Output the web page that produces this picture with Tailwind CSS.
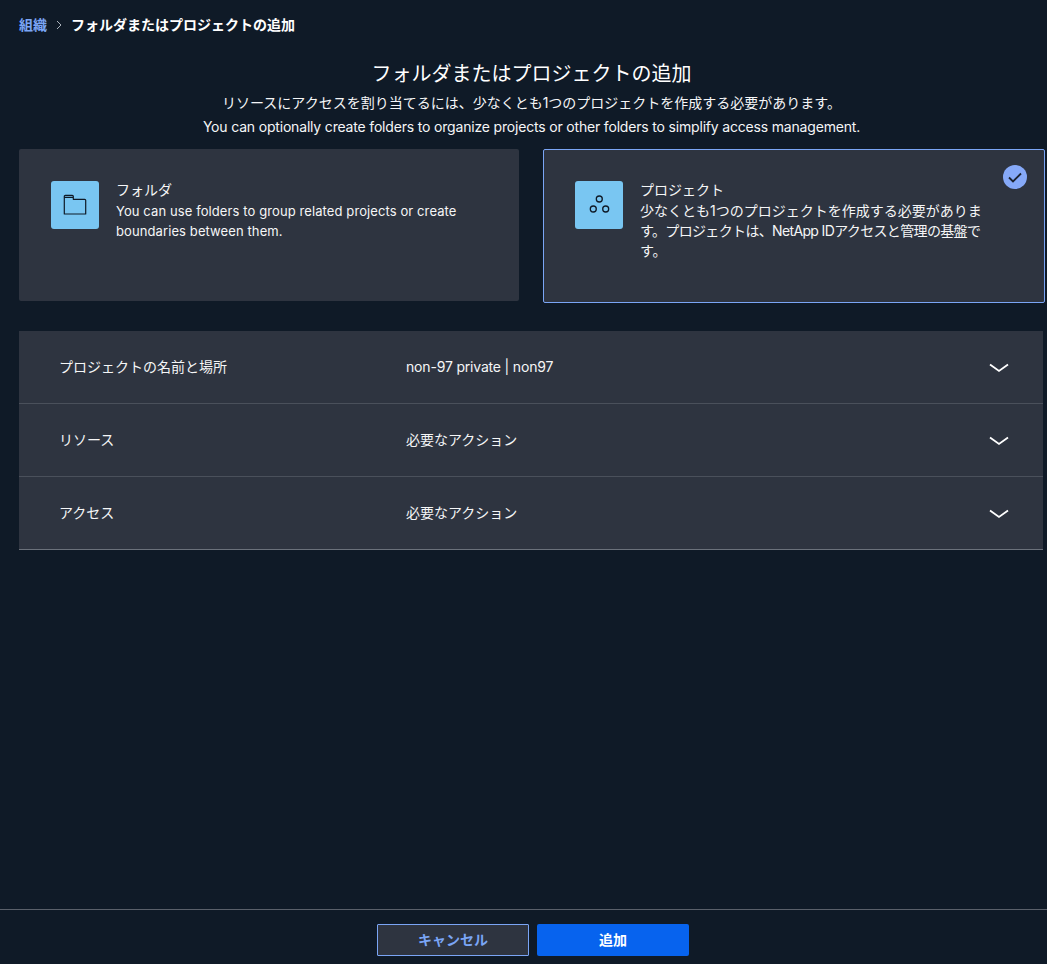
<!doctype html>
<html lang="ja">
<head>
<meta charset="utf-8">
<script src="https://cdn.jsdelivr.net/npm/@tailwindcss/browser@4"></script>
</head>
<body class="m-0 bg-[#0f1a27]">
<div class="w-[1047px] h-[964px] flex flex-col overflow-hidden bg-[#0f1a27] text-[#f5f6f7] font-['Inter','Noto_Sans_CJK_JP',sans-serif] text-[14px]">
  <nav class="h-[48px] mb-[2px] pl-[19px] flex items-center font-semibold text-[14px]">
    <span class="text-[#7aa5f5]">組織</span>
    <svg class="mx-[8px] mt-[2px]" width="8" height="10" viewBox="0 0 8 10" fill="none" stroke="#aab2bb" stroke-width="1"><path d="M2 1l4 4-4 4"/></svg>
    <span class="text-white">フォルダまたはプロジェクトの追加</span>
  </nav>
  <header class="text-center pl-[16px]">
    <h1 class="mt-[11px] text-[20px] leading-[26px] font-normal text-white">フォルダまたはプロジェクトの追加</h1>
    <p class="mt-[6px] leading-[20px]">リソースにアクセスを割り当てるには、少なくとも1つのプロジェクトを作成する必要があります。</p>
    <p class="mt-[4px] leading-[20px] tracking-[-0.18px]">You can optionally create folders to organize projects or other folders to simplify access management.</p>
  </header>
  <section class="mt-[12px] pl-[19px] flex gap-[24px] items-start">
    <div class="w-[500px] h-[152px] bg-[#2e3440] rounded-[2px] pt-[32px] pl-[32px] flex gap-[17px]">
      <div class="w-[48px] h-[48px] shrink-0 rounded-[3px] bg-[#79c6f2] flex items-center justify-center">
        <svg width="24" height="24" viewBox="0 0 24 24" fill="none" stroke="#0f1a27" stroke-width="1.2" stroke-linejoin="round"><path d="M1.300 21V3.300a1 1 0 0 1 1-1h7a1 1 0 0 1 1 1v3h11.400a1 1 0 0 1 1 1V21zM1.300 4.300h9"/></svg>
      </div>
      <div class="w-[345px] leading-[20px] -mt-[1px]">
        <div>フォルダ</div>
        <p class="mt-[1px] text-[13px] tracking-[0.1px]">You can use folders to group related projects or create boundaries between them.</p>
      </div>
    </div>
    <div class="relative w-[502px] h-[154px] bg-[#2e3440] border border-[#7aa5f5] rounded-[2px] pt-[31px] pl-[31px] flex gap-[17px]">
      <div class="w-[48px] h-[48px] shrink-0 rounded-[3px] bg-[#79c6f2] flex items-center justify-center">
        <svg width="24" height="24" viewBox="0 0 24 24" fill="none" stroke="#0f1a27" stroke-width="1.300"><circle cx="12.300" cy="6" r="3"/><circle cx="6.300" cy="16" r="3"/><circle cx="18.700" cy="16" r="3"/></svg>
      </div>
      <div class="w-[350px] leading-[20px] -mt-[1px]">
        <div>プロジェクト</div>
        <p class="mt-[1px]">少なくとも1つのプロジェクトを作成する必要がありま<br><span class="whitespace-nowrap tracking-[-0.65px]">す。プロジェクトは、NetApp IDアクセスと管理の基盤で</span><br>す。</p>
      </div>
      <div class="absolute top-[15px] right-[17px] w-[24px] h-[24px] rounded-full bg-[#86a9f8] flex items-center justify-center">
        <svg width="14" height="11" viewBox="0 0 14 11" fill="none" stroke="#1c2330" stroke-width="1.800"><path d="M1 5.500l4 4 8-8"/></svg>
      </div>
    </div>
  </section>
  <section class="mt-[28px] ml-[19px] w-[1024px] bg-[#2e3440]">
    <div class="h-[73px] flex items-center border-b border-[#4a505b] pl-[40px] pr-[34px]">
      <span class="w-[347px] -mt-[2px]">プロジェクトの名前と場所</span><span class="flex-1 -mt-[2px] tracking-[-0.18px]">non-97 private | non97</span>
      <svg class="mt-[2px]" width="20" height="10" viewBox="0 0 20 10" fill="none" stroke="#fff" stroke-width="1.800"><path d="M1 1.500l9 6.500 9-6.500"/></svg>
    </div>
    <div class="h-[73px] flex items-center border-b border-[#4a505b] pl-[40px] pr-[34px]">
      <span class="w-[347px] -mt-[2px]">リソース</span><span class="flex-1 -mt-[2px]">必要なアクション</span>
      <svg class="mt-[2px]" width="20" height="10" viewBox="0 0 20 10" fill="none" stroke="#fff" stroke-width="1.800"><path d="M1 1.500l9 6.500 9-6.500"/></svg>
    </div>
    <div class="h-[73px] flex items-center border-b border-[#6b717b] pl-[40px] pr-[34px]">
      <span class="w-[347px] -mt-[2px]">アクセス</span><span class="flex-1 -mt-[2px]">必要なアクション</span>
      <svg class="mt-[2px]" width="20" height="10" viewBox="0 0 20 10" fill="none" stroke="#fff" stroke-width="1.800"><path d="M1 1.500l9 6.500 9-6.500"/></svg>
    </div>
  </section>
  <footer class="mt-auto h-[55px] border-t border-[#5a606a] flex justify-center gap-[8px] pt-[14px] pl-[19px]">
    <button class="w-[152px] h-[32px] box-border pb-[2px] bg-[#2e3440] border border-[#7aa5f5] rounded-[1px] text-[#7aa5f5] font-semibold">キャンセル</button>
    <button class="w-[152px] h-[32px] pb-[2px] bg-[#0763ee] rounded-[2px] text-white font-semibold">追加</button>
  </footer>
</div>
</body>
</html>
